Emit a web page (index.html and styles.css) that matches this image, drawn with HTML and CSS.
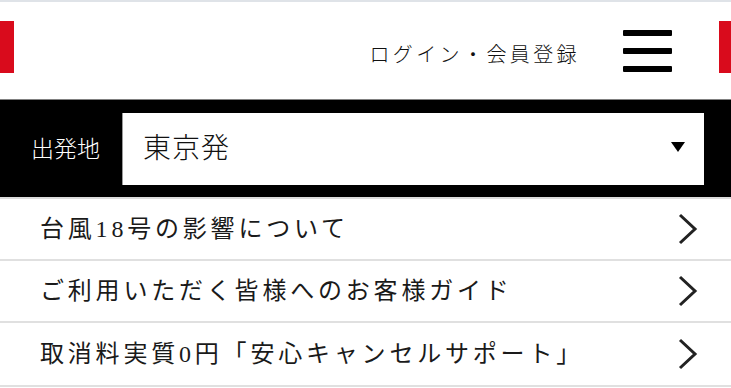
FILE: index.html
```html
<!DOCTYPE html>
<html lang="ja">
<head>
<meta charset="utf-8">
<title>出発地</title>
<link rel="stylesheet" href="styles.css">
</head>
<body>
<div class="topline"></div>
<header class="header">
  <span class="redbar redbar-left"></span>
  <span class="spacer"></span>
  <a class="login">ログイン・会員登録</a>
  <span class="burger"><i></i><i></i><i></i></span>
  <span class="redbar redbar-right"></span>
</header>
<section class="band">
  <span class="band-label">出発地</span>
  <div class="select">
    <span class="select-value">東京発</span>
    <span class="select-arrow"></span>
  </div>
</section>
<ul class="links">
  <li class="link"><span class="link-text">台風18号の影響について</span><svg class="chev" viewBox="0 0 20 32" width="20" height="32"><polyline points="2,2 17,16 2,30" fill="none" stroke="#222" stroke-width="3"/></svg></li>
  <li class="link"><span class="link-text">ご利用いただく皆様へのお客様ガイド</span><svg class="chev" viewBox="0 0 20 32" width="20" height="32"><polyline points="2,2 17,16 2,30" fill="none" stroke="#222" stroke-width="3"/></svg></li>
  <li class="link link-last"><span class="link-text">取消料実質0円「安心キャンセルサポート」</span><svg class="chev" viewBox="0 0 20 32" width="20" height="32"><polyline points="2,2 17,16 2,30" fill="none" stroke="#222" stroke-width="3"/></svg></li>
</ul>
</body>
</html>
```
FILE: styles.css
```css
* { box-sizing: border-box; }
html, body { margin: 0; padding: 0; background: #fff; }
body {
  width: 731px;
  font-family: "Liberation Serif", "Noto Sans CJK JP", serif;
  color: #1a1a1a;
  overflow: hidden;
}
.topline { height: 2px; background: #dfe3e8; }
.header {
  height: 98px;
  display: flex;
  align-items: flex-start;
  padding-top: 19px;
  border-bottom: 1px solid #808080;
}
.redbar { display: block; height: 52px; background: #d90b1c; }
.redbar-left { width: 14px; }
.redbar-right { width: 12px; }
.spacer { flex: 1; }
.login {
  margin-top: 24px;
  font-size: 20px;
  line-height: 20px;
  letter-spacing: 3.4px;
  color: #111;
  font-weight: 300;
  margin-right: 43px;
}
.burger {
  margin-top: 9px;
  width: 49px;
  height: 42px;
  display: flex;
  flex-direction: column;
  justify-content: space-between;
  margin-right: 47px;
}
.burger i { display: block; height: 6px; background: #000; border-radius: 1px; }
.band {
  height: 99px;
  background: #000;
  border-bottom: 2px solid #dcdcdc;
  display: flex;
  align-items: flex-start;
  padding: 13px 27px 0 31px;
}
.band-label {
  color: #fff;
  font-size: 23px;
  line-height: 23px;
  margin-top: 25px;
  width: 91px;
  font-weight: 300;
}
.select {
  flex: 1;
  height: 72px;
  background: #fff;
  border-left: 1px solid #999;
  display: flex;
  align-items: center;
  padding: 0 19px 0 20px;
}
.select-value {
  flex: 1;
  font-size: 28px;
  line-height: 28px;
  letter-spacing: 1px;
  font-weight: 300;
  color: #111;
}
.select-arrow {
  width: 0; height: 0;
  border-left: 7.5px solid transparent;
  border-right: 7.5px solid transparent;
  border-top: 10px solid #000;
  margin-top: -4px;
}
.links { list-style: none; margin: 0; padding: 0; }
.link {
  height: 62px;
  border-bottom: 2px solid #e0e0e0;
  display: flex;
  align-items: center;
  padding: 0 33px 0 40px;
}
.link-last { height: 64px; }
.link-text {
  flex: 1;
  font-size: 24px;
  line-height: 26px;
  letter-spacing: 3.8px;
  color: #1a1a1a;
}
.chev { display: block; }
```
